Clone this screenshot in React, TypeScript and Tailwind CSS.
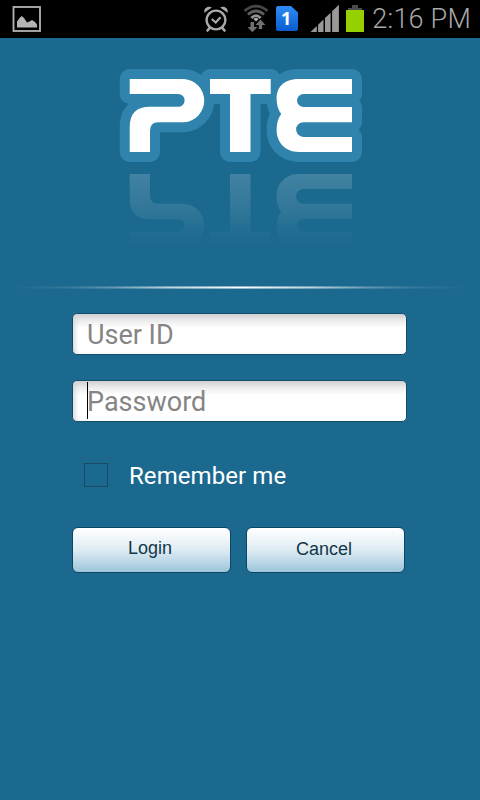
import React from "react";

const LETTERS =
  "M129.7 79H184a21.7 21.7 0 0 1 0 43.3H158Q150 122.3 150 131V152H129.7V127Q129.7 106.8 150 106.8H178.2a6.4 6.4 0 0 0 0-12.8H129.7Z" +
  "M210 79H270.7V94H250.5V152H230V94H210Z" +
  "M352 79H299C282 79 276.6 89 276.6 98.500Q276.600 108 281.200 114Q276.600 120 276.600 130C276.600 141 284 152 299 152H352V137H303.500a7.300 7.300 0 0 1 0-14.800H352V107H303.500a6.500 6.500 0 0 1 0-13H352Z";

function StatusBar() {
  return (
    <header className="h-[38px] w-full shrink-0 bg-black">
      <svg width="480" height="38" viewBox="0 0 480 38" className="block">
        <rect x="13.500" y="7" width="26.500" height="24" fill="none" stroke="#b4b4b4" strokeWidth="1.800" />
        <path d="M17 27.500V21.500L20 17.500L21.800 16L24 18L27 22.500L29.500 21.500L32 20L35 22L37 24.500V27.500Z" fill="#b4b4b4" />
        <g fill="none" stroke="#a9a9a9" strokeLinecap="round">
          <circle cx="216" cy="20" r="9.400" strokeWidth="2.400" />
          <path d="M211.800 19L215.700 22.500L220.500 17.200" strokeWidth="2.200" strokeLinecap="butt" />
          <path d="M209.500 28.200L207.500 30.500M222.500 28.200L224.500 30.500" strokeWidth="2.600" />
        </g>
        <path d="M204.300 12.800C203.500 8 208 5.500 211.900 7.500ZM227.700 12.800C228.500 8 224 5.500 220.100 7.500Z" fill="#a9a9a9" />
        <g fill="none">
          <path d="M244.500 10.900Q256 1.300 267.500 10.900" stroke="#474747" strokeWidth="2.800" />
          <path d="M248 14.500Q256 7.500 264 14.500" stroke="#606060" strokeWidth="2.800" />
          <path d="M251.300 17.900Q256 13.400 260.700 17.900" stroke="#929292" strokeWidth="2.800" />
        </g>
        <path d="M253.300 18.900Q256 16.700 258.700 18.900L256 21.500Z" fill="#a9a9a9" />
        <path d="M250.500 22H254V27H257.500L252.300 32.300L247.500 27H250.500ZM258.800 29V25H255.500L260.500 19.500L265.500 25H262.200V29Z" fill="#707070" />
        <defs>
          <linearGradient id="sim" x1="0" y1="0" x2="0" y2="1">
            <stop stopColor="#2f8cf5" />
            <stop offset="1" stopColor="#075dce" />
          </linearGradient>
        </defs>
        <path d="M278 6H291L298 12.500V29Q298 31 296 31H278Q276 31 276 29V8Q276 6 278 6Z" fill="url(#sim)" />
        <text x="281" y="25" fontFamily="'Open Sans', sans-serif" fontSize="18" fontWeight="700" fill="#fff">1</text>
        <path d="M310.500 32L316.800 26V32ZM318.100 32V24.700L323.500 19.500V32ZM325 32V18L330.600 12.700V32ZM332.100 32V11.200L338.900 4.700V32Z" fill="#999" />
        <path d="M352 5H358V8H352Z" fill="#4b4b4b" />
        <path d="M348 8H362V10H348Z" fill="#4b4b4b" />
        <rect x="346" y="10" width="18" height="22" fill="#97d000" />
        <text x="372.300" y="28" fontFamily="Roboto, sans-serif" fontSize="27" fontWeight="300" fill="#a8a8a8" textLength="98.500" lengthAdjust="spacing">2:16 PM</text>
      </svg>
    </header>
  );
}

function Logo() {
  return (
    <svg width="480" height="222" viewBox="0 38 480 222" className="block shrink-0" role="img" aria-label="PTE">
      <defs>
        <linearGradient id="fade" gradientUnits="userSpaceOnUse" x1="0" y1="152" x2="0" y2="79">
          <stop stopColor="#9bbccc" stopOpacity="0.300" />
          <stop offset="0.500" stopColor="#9bbccc" stopOpacity="0.160" />
          <stop offset="0.800" stopColor="#9bbccc" stopOpacity="0.040" />
          <stop offset="1" stopColor="#9bbccc" stopOpacity="0" />
        </linearGradient>
      </defs>
      <path d={LETTERS} fill="#2f83ac" stroke="#2f83ac" strokeWidth="20" strokeLinejoin="round" />
      <path d={LETTERS} fill="#fff" />
      <path d={LETTERS} fill="url(#fade)" transform="matrix(1 0 0 -1 0 326)" />
    </svg>
  );
}

const fieldClass =
  "block h-[42px] w-[335px] rounded-[5px] border border-[#124e6c] bg-white bg-[linear-gradient(to_bottom,#d0d0d2_0px,#ededee_7px,#ffffff_14px)] pt-[2px] pl-[14px] font-[Roboto,sans-serif] text-[27px] text-black caret-transparent shadow-[inset_5px_0_5px_-3px_#d5d5d8] outline-none placeholder:text-[#858585] placeholder:opacity-100";

const buttonClass =
  "flex h-[46px] w-[159px] justify-center rounded-[6px] border border-[#0d4564] bg-linear-to-b from-white via-[#deecf3] to-[#9cc5da] pr-[3px] font-['Liberation_Sans',Arial,sans-serif] text-[18px] leading-[22px] text-[#12364a]";

export default function App() {
  return (
    <main className="flex h-[800px] w-[480px] flex-col overflow-hidden bg-[#1c698f]">
      <StatusBar />
      <Logo />
      <div className="mt-[26px] h-[3px] w-full shrink-0 bg-[linear-gradient(to_bottom,rgba(255,255,255,.3),white_50%,rgba(255,255,255,.3))] mask-[linear-gradient(to_right,transparent_2%,rgba(0,0,0,.1)_14%,rgba(0,0,0,.3)_23%,rgba(0,0,0,.7)_35%,black_50%,rgba(0,0,0,.7)_65%,rgba(0,0,0,.3)_77%,rgba(0,0,0,.1)_86%,transparent_98%)]" />
      <form className="mt-[24px] ml-[72px] flex flex-col" onSubmit={(e) => e.preventDefault()}>
        <input className={fieldClass} placeholder="User ID" aria-label="User ID" />
        <div className="relative mt-[25px] w-[335px]">
          <input className={fieldClass} type="password" placeholder="Password" aria-label="Password" />
          <span className="absolute top-[2px] left-[15px] h-[37px] w-px bg-black" />
        </div>
        <label className="mt-[37px] ml-[12px] flex h-[32px] items-center">
          <input type="checkbox" className="size-[24px] appearance-none border border-[#1c4a62]" />
          <span className="ml-[21px] pt-[2px] font-[Roboto,sans-serif] text-[24px] leading-[32px] tracking-[0.08px] whitespace-nowrap text-white">Remember me</span>
        </label>
        <div className="mt-[36px] flex gap-[15px]">
          <button type="submit" className={buttonClass + " pt-[9px]"}>Login</button>
          <button type="button" className={buttonClass + " pt-[10px]"}>Cancel</button>
        </div>
      </form>
    </main>
  );
}
